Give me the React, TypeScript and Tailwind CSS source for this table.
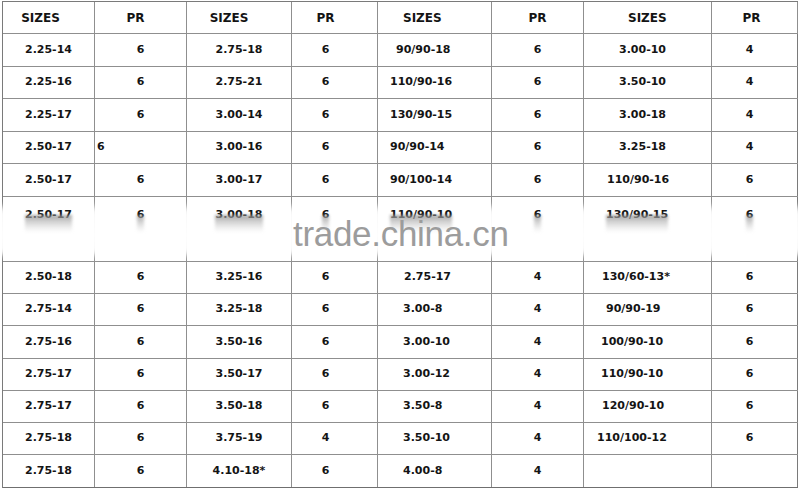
import React from "react";

type Cell = [string, string?];

const widths = [
  "w-[92px]",
  "w-[92px]",
  "w-[105px]",
  "w-[86px]",
  "w-[114px]",
  "w-[92px]",
  "w-[128px]",
  "w-[86px]",
];

// default placement of the text in each column
const colAlign = [
  "justify-center",
  "justify-center",
  "justify-center",
  "justify-center pr-[18px]",
  "justify-start pl-[25px]",
  "justify-center",
  "justify-start pl-[19px]",
  "justify-center pr-[10px]",
];

const header: Cell[] = [
  ["SIZES", "justify-center pr-[16px]"],
  ["PR", "justify-center pr-[10px]"],
  ["SIZES", "justify-center pr-[20px]"],
  ["PR", "justify-center pr-[18px]"],
  ["SIZES", "justify-start pl-[25px]"],
  ["PR", "justify-center"],
  ["SIZES", "justify-start pl-[44px]"],
  ["PR", "justify-center pr-[6px]"],
];

const rows: { h: string; cells: Cell[]; tall?: boolean }[] = [
  {
    h: "h-[33px]",
    cells: [["2.25-14"], ["6"], ["2.75-18"], ["6"], ["90/90-18", "justify-start pl-[18px]"], ["6"], ["3.00-10", "justify-start pl-[35px]"], ["4"]],
  },
  {
    h: "h-[32px]",
    cells: [["2.25-16"], ["6"], ["2.75-21"], ["6"], ["110/90-16", "justify-start pl-[12px]"], ["6"], ["3.50-10", "justify-start pl-[35px]"], ["4"]],
  },
  {
    h: "h-[33px]",
    cells: [["2.25-17"], ["6"], ["3.00-14"], ["6"], ["130/90-15", "justify-start pl-[12px]"], ["6"], ["3.00-18", "justify-start pl-[35px]"], ["4"]],
  },
  {
    h: "h-[32px]",
    cells: [["2.50-17"], ["6", "justify-start pl-[2px]"], ["3.00-16"], ["6"], ["90/90-14", "justify-start pl-[12px]"], ["6"], ["3.25-18", "justify-start pl-[35px]"], ["4"]],
  },
  {
    h: "h-[33px]",
    cells: [["2.50-17"], ["6"], ["3.00-17"], ["6"], ["90/100-14", "justify-start pl-[12px]"], ["6"], ["110/90-16", "justify-start pl-[23px]"], ["6"]],
  },
  {
    h: "h-[65px]",
    tall: true,
    cells: [["2.50-17"], ["6"], ["3.00-18"], ["6"], ["110/90-10", "justify-start pl-[12px]"], ["6"], ["130/90-15", "justify-start pl-[22px]"], ["6"]],
  },
  {
    h: "h-[32px]",
    cells: [["2.50-18"], ["6"], ["3.25-16"], ["6"], ["2.75-17", "justify-start pl-[26px]"], ["4"], ["130/60-13*", "justify-start pl-[18px]"], ["6"]],
  },
  {
    h: "h-[32px]",
    cells: [["2.75-14"], ["6"], ["3.25-18"], ["6"], ["3.00-8"], ["4"], ["90/90-19", "justify-start pl-[22px]"], ["6"]],
  },
  {
    h: "h-[33px]",
    cells: [["2.75-16"], ["6"], ["3.50-16"], ["6"], ["3.00-10"], ["4"], ["100/90-10", "justify-start pl-[17px]"], ["6"]],
  },
  {
    h: "h-[32px]",
    cells: [["2.75-17"], ["6"], ["3.50-17"], ["6"], ["3.00-12"], ["4"], ["110/90-10", "justify-start pl-[17px]"], ["6"]],
  },
  {
    h: "h-[32px]",
    cells: [["2.75-17"], ["6"], ["3.50-18"], ["6"], ["3.50-8"], ["4"], ["120/90-10", "justify-start pl-[18px]"], ["6"]],
  },
  {
    h: "h-[32px]",
    cells: [["2.75-18"], ["6"], ["3.75-19"], ["4"], ["3.50-10"], ["4"], ["110/100-12", "justify-start pl-[13px]"], ["6"]],
  },
  {
    h: "h-[33px]",
    cells: [["2.75-18"], ["6"], ["4.10-18*"], ["6"], ["4.00-8"], ["4"], [""], [""]],
  },
];

// x positions of the grid lines, used for the white haze of the watermark
const lineX = [2, 94, 186, 291, 377, 491, 583, 711, 797];

export default function App() {
  return (
    <div className="relative h-[490px] w-[800px] overflow-hidden bg-white font-['DejaVu_Sans',sans-serif] text-[#141414]">
      <div className="ml-[2px] mt-[1px] w-[796px] border-l border-t border-[#7a7a7a]">
        <div className="flex h-[32px] border-b border-[#8f8f8f] text-[12px] font-bold">
          {header.map(([t, cls], i) => (
            <div key={i} className={`flex items-center border-r border-[#8f8f8f] ${widths[i]} ${cls}`}>
              {t}
            </div>
          ))}
        </div>
        {rows.map((row, r) => (
          <div
            key={r}
            className={`flex ${row.h} border-b text-[11px] font-bold ${r === rows.length - 1 ? "border-[#6f6f6f]" : "border-[#8f8f8f]"}`}
          >
            {row.cells.map(([t, cls], i) => (
              <div
                key={i}
                className={`flex border-r ${i === 7 ? "border-[#7a7a7a]" : "border-[#8f8f8f]"} ${widths[i]} ${cls ?? colAlign[i]} ${row.tall ? "items-start pt-[10px]" : "items-center"}`}
              >
                {row.tall ? (
                  <span className="relative inline-block">
                    {t}
                    <span className="absolute left-0 right-0 top-[8px] h-[18px] bg-gradient-to-b from-[#8a8a8a]/80 to-transparent blur-[1.5px]" />
                  </span>
                ) : (
                  t
                )}
              </div>
            ))}
          </div>
        ))}
      </div>

      {/* watermark band */}
      <div className="pointer-events-none absolute left-0 top-[214px] h-[42px] w-[800px] bg-gradient-to-b from-white/0 via-white/60 to-white/0" />
      {lineX.map((x) => (
        <div
          key={x}
          className="pointer-events-none absolute top-[206px] h-[50px] w-[12px] rounded-full bg-white blur-[3px]"
          style={{ left: x - 6 }}
        />
      ))}
      <div className="pointer-events-none absolute left-[293px] top-[216px] font-['Liberation_Sans',sans-serif] text-[35px] leading-none tracking-[-0.3px] text-[#9c9c9c]">
        trade.china.cn
      </div>
    </div>
  );
}
